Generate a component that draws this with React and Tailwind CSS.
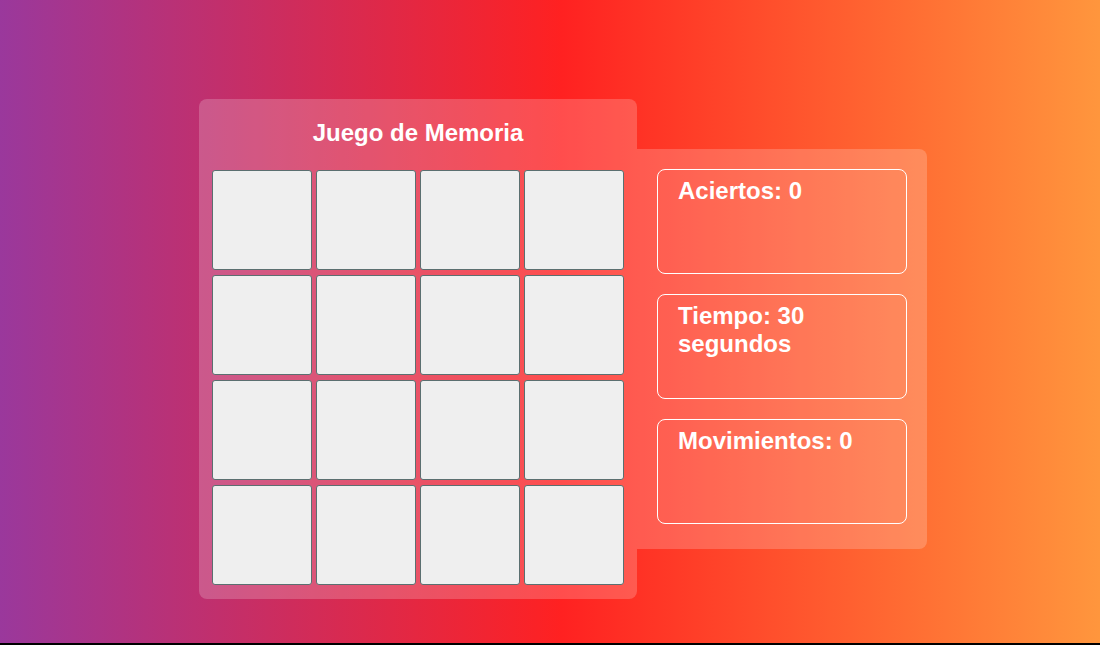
export default function App() {
  const cards = Array.from({ length: 16 });
  const font = { fontFamily: '"Liberation Sans", Arial, sans-serif' };
  return (
    <div className="w-[1100px] h-[645px] bg-black" style={font}>
      <div className="h-[643px] bg-[linear-gradient(to_right,#9a389c_0%,#ff2121_51%,#ff963d_100%)] flex items-start pl-[199px] pt-[99px]">
        <div className="w-[438px] h-[500px] bg-white/20 rounded-lg px-[13px] pt-[20px]">
          <h2 className="text-white text-[24px] font-bold leading-[28px] text-center mb-[23px]">Juego de Memoria</h2>
          <div className="grid grid-cols-[repeat(4,100px)] gap-x-[4px] gap-y-[5px]">
            {cards.map((_, i) => (
              <div key={i} className="w-[100px] h-[100px] bg-[#efefef] border border-[#5b6f70] rounded-[3px]" />
            ))}
          </div>
        </div>
        <div className="mt-[50px] w-[290px] h-[400px] bg-white/20 rounded-r-lg px-[20px] pt-[20px] flex flex-col gap-[20px]">
          {["Aciertos: 0", "Tiempo: 30 segundos", "Movimientos: 0"].map((t) => (
            <div key={t} className="w-[250px] h-[105px] border border-white rounded-lg px-[20px] pt-[7px]">
              <div className="text-white text-[24px] font-bold leading-[27.6px]">{t}</div>
            </div>
          ))}
        </div>
      </div>
    </div>
  );
}
